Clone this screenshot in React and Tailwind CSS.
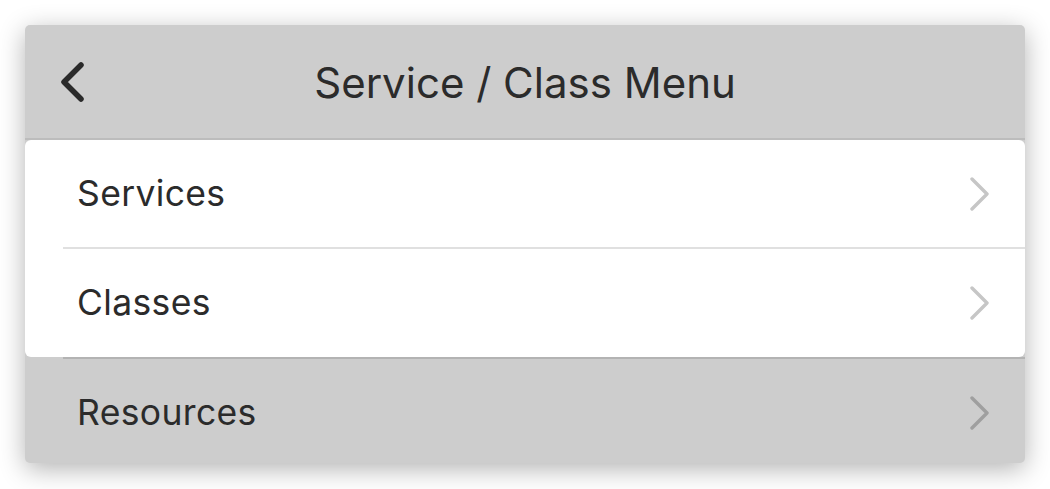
import React from "react";

function Chevron({ color }) {
  return (
    <svg width="22" height="34" viewBox="0 0 22 34" fill="none">
      <path d="M3 2 L18 17 L3 32" stroke={color} strokeWidth="3.4" strokeLinecap="round" strokeLinejoin="round" />
    </svg>
  );
}

function Row({ label, color, extra = "" }) {
  return (
    <div className={"flex items-center justify-between pl-[52px] pr-[34px] h-full " + extra}>
      <span className="text-[35.5px] text-[#2b2b2b] tracking-[0.35px]">{label}</span>
      <Chevron color={color} />
    </div>
  );
}

export default function App() {
  return (
    <div className="w-[1050px] h-[489px] bg-white pt-[25px] pl-[25px]" style={{ fontFamily: "Inter, 'Noto Sans', sans-serif" }}>
      <div className="w-[1000px] h-[438px] bg-[#cdcdcd] rounded-[5px] shadow-[0_6px_26px_rgba(0,0,0,0.3)] flex flex-col overflow-hidden">
        <div className="h-[115px] flex items-center relative border-b-2 border-[#bcbcbc] shrink-0">
          <div className="absolute left-[33px] top-[36px]">
            <svg width="30" height="42" viewBox="0 0 30 42" fill="none">
              <path d="M23 4 L6 21 L23 38" stroke="#2a2a2a" strokeWidth="5.5" strokeLinecap="round" strokeLinejoin="round" />
            </svg>
          </div>
          <div className="flex-1 text-center text-[42px] text-[#2b2b2b] pt-[2px]">Service / Class Menu</div>
        </div>
        <div className="bg-white rounded-[6px] flex flex-col shrink-0">
          <div className="h-[107px]">
            <Row label="Services" color="#c6c6c6" />
          </div>
          <div className="ml-[38px] h-[2px] bg-[#e0e0e0]" />
          <div className="h-[108px]">
            <Row label="Classes" color="#c6c6c6" />
          </div>
        </div>
        <div className="ml-[38px] h-[2px] bg-[#b3b3b3] shrink-0" />
        <div className="flex-1">
          <Row label="Resources" color="#9f9f9f" extra="pt-[4px]" />
        </div>
      </div>
    </div>
  );
}
